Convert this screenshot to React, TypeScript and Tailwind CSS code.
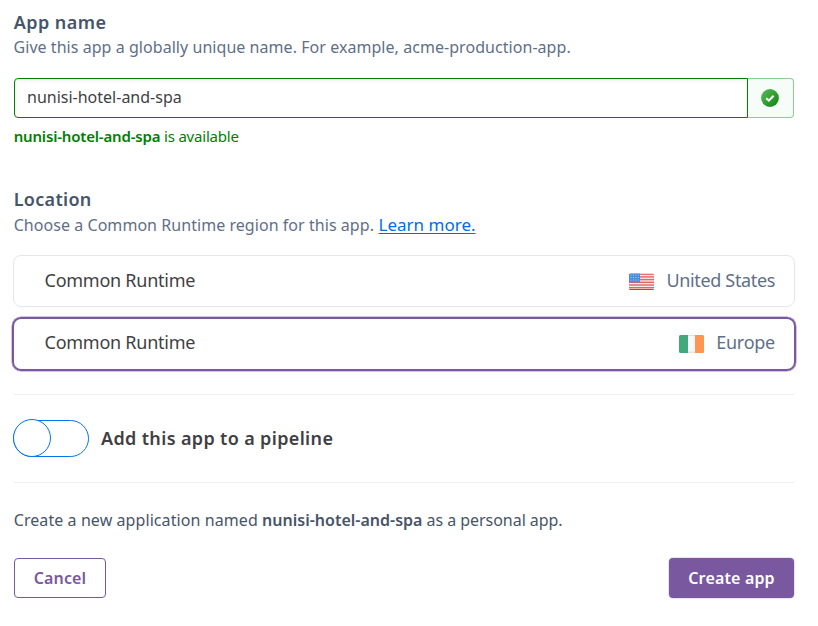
function CheckBadge() {
  return (
    <svg width="18" height="18" viewBox="0 0 18 18">
      <defs>
        <linearGradient id="badge" x1="0" y1="0" x2="1" y2="1">
          <stop offset="0" stopColor="#5cbb5c" />
          <stop offset="1" stopColor="#0b850b" />
        </linearGradient>
      </defs>
      <circle cx="9" cy="9" r="8.9" fill="url(#badge)" />
      <path d="M5.2 9.3 L7.8 11.6 L12.6 6.8" fill="none" stroke="#fff" strokeWidth="2" />
    </svg>
  );
}

function UsFlag() {
  return (
    <svg width="25" height="18" viewBox="0 0 25 18" className="mt-[3px]">
      <clipPath id="us">
        <rect x="0" y="0.5" width="25" height="16.5" rx="1.5" />
      </clipPath>
      <g clipPath="url(#us)">
        <rect width="26" height="18" fill="#f5e9e8" />
        {[0, 2.7, 5.4, 8.1, 10.8, 13.5].map((y) => (
          <rect key={y} y={y + 0.5} width="26" height="1.4" fill="#e4675f" />
        ))}
        <rect width="11" height="9.3" fill="#438fdd" />
        {[2, 4.5, 7].map((y) =>
          [2, 4.4, 6.8, 9.2].map((x) => (
            <circle key={`${x}-${y}`} cx={x} cy={y} r="0.6" fill="#b5d5f5" />
          )),
        )}
        <rect y="16" width="26" height="1" fill="#c93f3c" />
      </g>
    </svg>
  );
}

function IrishFlag() {
  return (
    <svg width="25" height="18" viewBox="0 0 25 18" className="mt-[3px]">
      <clipPath id="ie">
        <rect x="0" y="0" width="25" height="18" rx="1.5" />
      </clipPath>
      <g clipPath="url(#ie)">
        <rect width="26" height="18" fill="#f8f8f8" />
        <rect x="8" width="9" height="1" fill="#dedede" />
        <rect x="8" y="16.5" width="9" height="1.5" fill="#e2e2e2" />
        <rect width="9" height="18" fill="#43a97d" />
        <rect x="16" width="9" height="18" fill="#ff9550" />
      </g>
    </svg>
  );
}

export default function App() {
  return (
    <main className="h-[626px] w-[818px] overflow-hidden bg-white pr-6 pl-[13px] font-['Noto_Sans',sans-serif] text-base whitespace-nowrap text-[#5f6f87]">
      <h2 className="pt-[10px] pl-[0.7px] text-lg leading-6 font-semibold tracking-[0.45px] text-[#475569]">App name</h2>
      <p className="mt-px pl-[0.5px] leading-6 tracking-[0.05px]">Give this app a globally unique name. For example, acme-production-app.</p>

      <div className="mt-[19px] ml-px flex h-10 w-[780px]">
        <div className="flex w-[734px] items-center rounded-l border border-[#008000] pb-[2px] pl-3 text-[#3f3f44] shadow-[inset_0_2px_4px_rgba(0,0,0,0.05)]">
          nunisi-hotel-and-spa
        </div>
        <div className="flex flex-1 items-center justify-center rounded-r border border-l-0 border-[#8ccf96] bg-[#f6fcf8] pr-px">
          <CheckBadge />
        </div>
      </div>
      <p className="mt-[6px] pl-[0.7px] text-[15px] leading-6 tracking-[-0.2px] text-[#008000]">
        <strong className="font-semibold tracking-[-0.18px]">nunisi-hotel-and-spa</strong> is available
      </p>

      <h2 className="mt-[39px] pl-[0.7px] text-lg leading-6 font-semibold tracking-[0.3px] text-[#475569]">Location</h2>
      <p className="mt-[2px] flex h-6 items-baseline pl-[0.7px] leading-6">
        <span className="tracking-[0.05px]">Choose a Common Runtime region for this app.</span>
        <a className="ml-[4.6px] text-[17px] text-[#006deb] underline decoration-1 underline-offset-2">Learn more.</a>
      </p>

      <div className="mt-[18px] flex h-[52px] w-[782px] items-center justify-between rounded-lg border border-[#e3e5f1] pr-[19px] pb-[2px] pl-[30.5px] text-lg">
        <span className="tracking-[-0.25px] text-[#3f3f44]">Common Runtime</span>
        <span className="flex items-center gap-3 tracking-[-0.35px]">
          <UsFlag />
          United States
        </span>
      </div>
      <div className="mt-[10px] -ml-px flex h-[54px] w-[784px] items-center justify-between rounded-[9px] border-2 border-[#79589f] pr-[19px] pb-[4px] pl-[30.5px] text-lg shadow-[0_0_0_0.5px_#a58cc0]">
        <span className="tracking-[-0.25px] text-[#3f3f44]">Common Runtime</span>
        <span className="flex items-center gap-3 tracking-[-0.25px]">
          <IrishFlag />
          Europe
        </span>
      </div>

      <div className="mt-[23px] ml-px flex h-[89px] w-[780px] items-center border-y border-[#efefef]">
        <div className="-ml-px flex h-[37px] w-[76px] items-center rounded-full border border-[#0176eb]">
          <div className="-mt-px -ml-px h-[38px] w-[38px] shrink-0 rounded-full border border-[#0176eb] bg-white" />
        </div>
        <span className="ml-3 pb-[2px] text-lg font-semibold tracking-[0.35px] text-[#3f3f44]">Add this app to a pipeline</span>
      </div>

      <p className="mt-[25px] pl-[0.7px] leading-6 tracking-[0.08px] text-[#475569]">
        Create a new application named <strong className="font-semibold tracking-[0.01px]">nunisi-hotel-and-spa</strong><span className="tracking-[-0.05px]"> as a personal app.</span>
      </p>

      <div className="mt-[26px] ml-px flex h-10 w-[780px] justify-between font-semibold">
        <button className="h-10 w-[92px] rounded border border-[#79589f] pb-[1px] tracking-[0.15px] text-[#79589f]">Cancel</button>
        <button className="h-10 w-[125px] rounded bg-[#79589f] pb-[1px] tracking-[0.15px] text-white shadow-[0_0_0_1px_#e3e5f1]">Create app</button>
      </div>
    </main>
  );
}
